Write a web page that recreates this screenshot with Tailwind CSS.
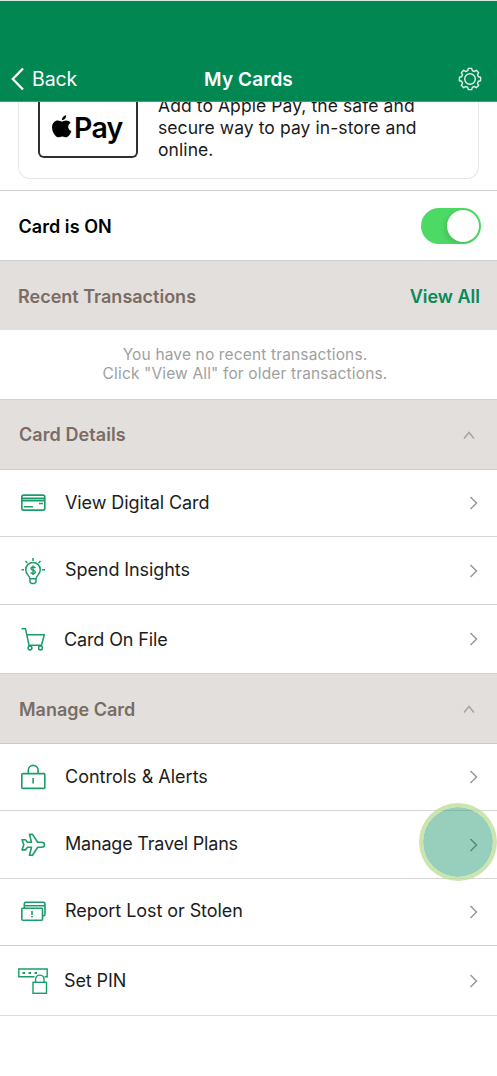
<!DOCTYPE html>
<html lang="en">
<head>
<meta charset="utf-8">
<title>My Cards</title>
<script src="https://cdn.jsdelivr.net/npm/@tailwindcss/browser@4"></script>
</head>
<body class="bg-white">
<div class="w-[497px] h-[1076px] overflow-hidden bg-white font-['Inter',sans-serif] text-[18px] text-[#1c1c1c] flex flex-col">
  <header class="h-[102px] shrink-0 bg-[#008752] border-t border-t-[#d5eae0] border-b border-b-[#3ba27b] text-white flex items-end">
    <div class="w-full h-[46px] grid grid-cols-3 items-center pl-[11px] pr-[15px] pt-[2px]">
      <div class="flex items-center gap-[8px]">
        <svg class="w-[13px] h-[24px]" viewBox="0 0 13 24" fill="none" stroke="currentColor" stroke-width="2.3"><path d="M12 1.5 1.8 12 12 22.5"/></svg>
        <span class="text-[19.500px] leading-6 tracking-[-0.1px]">Back</span>
      </div>
      <h1 class="text-center font-semibold text-[19px] leading-6 tracking-[0.1px] pl-[4px] pt-[2px]">My Cards</h1>
      <svg class="w-6 h-6 justify-self-end" viewBox="0 0 24 24" fill="none" stroke="#e6f3ed" stroke-width="1.4" stroke-linejoin="round"><path d="M10.300 1.400L13.700 1.400L14.300 3.600L16.300 4.500L18.300 3.300L20.700 5.700L19.500 7.700L20.400 9.700L22.600 10.300L22.600 13.700L20.400 14.300L19.500 16.300L20.700 18.300L18.300 20.700L16.300 19.500L14.300 20.400L13.700 22.600L10.300 22.600L9.700 20.400L7.700 19.500L5.700 20.700L3.300 18.300L4.500 16.300L3.600 14.300L1.400 13.700L1.400 10.300L3.600 9.700L4.500 7.700L3.300 5.700L5.700 3.300L7.700 4.500L9.700 3.600Z"/><circle cx="12" cy="12" r="5.300"/></svg>
    </div>
  </header>

  <section class="h-[88px] shrink-0 overflow-hidden px-[18px]">
    <div class="h-[77px] border border-t-0 border-[#e5e5e5] rounded-b-[12px] flex pl-[19px]">
      <div class="w-[100px] h-[56px] border-2 border-t-0 border-[#303030] rounded-b-[6px] flex pl-[11px] pt-[10px]">
        <svg class="w-[21px] h-[24px] mt-[2px]" viewBox="0 0 20 24" preserveAspectRatio="none" fill="#000"><path d="M10.300 6.300C10.200 3.700 12.100 1.700 14.400 1.300C14.700 3.900 12.600 6.200 10.300 6.300ZM10.300 7.600C11.300 7.600 12.500 6.500 14.500 6.500C16.100 6.500 17.700 7.300 18.700 8.800C15.300 10.900 15.800 15.700 19.400 17.100C18.700 19.400 16.800 23.300 14.600 23.300C13.100 23.300 12.600 22.400 10.700 22.400C8.900 22.400 8.200 23.300 6.900 23.300C4.300 23.300 1 17.900 1 13.500C1 9.300 3.600 6.600 6.500 6.600C8.200 6.600 9.300 7.600 10.300 7.600Z"/></svg>
        <span class="ml-[2px] text-[28.500px] leading-[32px] font-semibold tracking-[-0.7px] text-black">Pay</span>
      </div>
      <p class="ml-[20px] -mt-[7px] text-[17.500px] leading-[22px] tracking-[0.08px] whitespace-nowrap text-[#1a1a1a]">Add to Apple Pay, the safe and<br>secure way to pay in-store and<br>online.</p>
    </div>
  </section>

  <section class="h-[71px] shrink-0 border-y border-[#cdcdcd] flex items-center justify-between pl-[18.500px] pr-[16px]">
    <span class="font-semibold text-black tracking-[0.05px] pt-[2px]">Card is ON</span>
    <span class="w-[60px] h-[36px] rounded-full bg-[#4cd964] p-[2px] flex justify-end"><span class="size-8 rounded-full bg-white shadow-[-2px_2px_5px_rgba(0,0,0,0.12)]"></span></span>
  </section>

  <section class="h-[69px] shrink-0 bg-[#e3dfdc] flex items-center justify-between pl-[18px] pr-[17px] pt-[2px] font-semibold">
    <h2 class="text-[#7a6c65]">Recent Transactions</h2>
    <span class="text-[#088a58]">View All</span>
  </section>
  <p class="h-[70px] shrink-0 border-b border-[#d3d1d0] pt-[15px] text-center text-[15.500px] leading-[19px] tracking-[0.15px] text-[#a0a0a0] pr-[7px]">You have no recent transactions.<br>Click "View All" for older transactions.</p>

  <section class="h-[70px] shrink-0 bg-[#e3dfdc] border-b border-[#cbcbcb] flex items-center justify-between pl-[19px] pr-[21px]">
    <h2 class="font-semibold tracking-[0.08px] text-[#7a6c65]">Card Details</h2>
    <svg class="w-[14px] h-[10px]" viewBox="0 0 14 10" fill="none" stroke="#a5a3a1" stroke-width="1.500"><path d="M2 8.500 7 2.500 12 8.500"/></svg>
  </section>
  <ul class="shrink-0">
    <li class="h-[66px] border-b border-[#d5d5d5] box-content flex items-center">
      <svg class="w-[65px] h-[40px] shrink-0" viewBox="0 0 65 40" fill="none" stroke="#1b9c68" stroke-width="1.600"><rect x="21.800" y="12.100" width="23" height="15" rx="1.800"/><path stroke-width="1.800" d="M22 15.400H45M22 17.600H45"/><path d="M24 23.700H33M39 20.500H43"/></svg>
      <span class="grow pb-[2px] tracking-[-0.08px]">View Digital Card</span>
      <svg class="w-[9px] h-[14px] mr-[19px]" viewBox="0 0 9 14" fill="none" stroke="#999" stroke-width="1.500"><path d="M1.500 1 7.500 7 1.500 13"/></svg>
    </li>
    <li class="h-[67px] border-b border-[#d0d0d0] box-content flex items-center">
      <svg class="w-[65px] h-[40px] shrink-0" viewBox="0 0 65 40" fill="none" stroke="#1b9c68" stroke-width="1.500"><path d="M30 27.800C30 24.800 25.700 23.500 25.700 18.800A7.300 7.300 0 0 1 40.300 18.800C40.300 23.500 36 24.800 36 27.800ZM30 28V31L31.500 32.500H34.500L36 31V28M33 7V10M25.500 10 27.500 12M40.500 10 38.500 12M21.500 18.800H24M42 18.800H45"/><path stroke-width="1.400" d="M33 14.500V24M35.300 17C34.800 15.800 31 15.500 31 17.500C31 19.700 35.300 18.700 35.300 21C35.300 23.200 31.200 23 30.700 21.500"/></svg>
      <span class="grow pb-[3px] tracking-[-0.08px]">Spend Insights</span>
      <svg class="w-[9px] h-[14px] mr-[19px]" viewBox="0 0 9 14" fill="none" stroke="#999" stroke-width="1.500"><path d="M1.500 1 7.500 7 1.500 13"/></svg>
    </li>
    <li class="h-[68px] border-b border-[#d0d0d0] box-content flex items-center">
      <svg class="w-[64px] h-[40px] shrink-0" viewBox="0 0 64 40" fill="none" stroke="#1b9c68" stroke-width="1.500" stroke-linejoin="round"><path d="M21.500 9.700H25.500L29 26.300H41.500L44.300 15.800H26.800"/><circle cx="30" cy="29" r="1.900"/><circle cx="40.500" cy="29" r="1.900"/></svg>
      <span class="grow tracking-[-0.12px]">Card On File</span>
      <svg class="w-[9px] h-[14px] mr-[19px]" viewBox="0 0 9 14" fill="none" stroke="#999" stroke-width="1.500"><path d="M1.500 1 7.500 7 1.500 13"/></svg>
    </li>
  </ul>

  <section class="h-[70px] shrink-0 bg-[#e3dfdc] border-b border-[#cbcbcb] flex items-center justify-between pl-[19px] pr-[21px] pt-px">
    <h2 class="font-semibold text-[#7a6c65]">Manage Card</h2>
    <svg class="w-[14px] h-[10px]" viewBox="0 0 14 10" fill="none" stroke="#a5a3a1" stroke-width="1.500"><path d="M2 8.500 7 2.500 12 8.500"/></svg>
  </section>
  <ul class="shrink-0">
    <li class="h-[66px] border-b border-[#d5d5d5] box-content flex items-center">
      <svg class="w-[65px] h-[40px] shrink-0" viewBox="0 0 65 40" fill="none" stroke="#1b9c68" stroke-width="1.600"><rect x="21.800" y="16.600" width="23" height="14.800" rx="1"/><path d="M28.300 16.600V13.300A4.900 4.900 0 0 1 38.100 13.300V16.600M33.100 21V26.500"/></svg>
      <span class="grow pb-[2px]">Controls &amp; Alerts</span>
      <svg class="w-[9px] h-[14px] mr-[19px]" viewBox="0 0 9 14" fill="none" stroke="#999" stroke-width="1.500"><path d="M1.500 1 7.500 7 1.500 13"/></svg>
    </li>
    <li class="relative h-[67px] border-b border-[#d5d5d5] box-content flex items-center">
      <svg class="w-[65px] h-[40px] shrink-0" viewBox="0 0 65 40" fill="none" stroke="#1b9c68" stroke-width="1.600" stroke-linejoin="round"><path d="M29.500 9.400H32.500L37.700 17.200H41.500C43.500 17.200 44.500 18.700 44.500 19.700C44.500 20.700 43.500 22.200 41.500 22.200H37.700L32.500 30.200H29.500L31.500 22.200H27.500L25.500 24.900H22L23.800 19.700L22 14.700H25.500L27.500 17.200H31.500Z"/></svg>
      <span class="grow pb-[3px] tracking-[-0.2px]">Manage Travel Plans</span>
      <svg class="w-[9px] h-[14px] mr-[19px]" viewBox="0 0 9 14" fill="none" stroke="#777" stroke-width="1.500"><path d="M1.500 1 7.500 7 1.500 13"/></svg>
      <span class="absolute left-[419px] -top-[8px] size-[78px] rounded-full border-[4.500px] border-[#b8de93]/75 bg-[#32a07a]/50 bg-clip-padding"></span>
    </li>
    <li class="h-[66px] border-b border-[#d0d0d0] box-content flex items-center">
      <svg class="w-[65px] h-[40px] shrink-0" viewBox="0 0 65 40" fill="none" stroke="#1b9c68" stroke-width="1.600"><rect x="21.800" y="16.300" width="20.700" height="12" rx="1"/><path d="M24.300 16.300V11.800Q24.300 10.300 25.800 10.300H43.500Q45 10.300 45 11.800V22.300Q45 23.800 43.500 23.800H42.500M24.500 13.800H45M32 19V23M32 24V25.500"/></svg>
      <span class="grow pb-[3px] tracking-[-0.07px]">Report Lost or Stolen</span>
      <svg class="w-[9px] h-[14px] mr-[19px]" viewBox="0 0 9 14" fill="none" stroke="#999" stroke-width="1.500"><path d="M1.500 1 7.500 7 1.500 13"/></svg>
    </li>
    <li class="h-[69px] border-b border-[#dcdcdc] box-content flex items-center">
      <svg class="w-[64px] h-[40px] shrink-0" viewBox="0 0 64 40" fill="none" stroke="#1b9c68" stroke-width="1.400"><path d="M34.500 15.800H18.800V8H47.200V15.800H44.500"/><rect x="33" y="21.300" width="13.500" height="11"/><path d="M35.600 21V18.300A4.200 4.200 0 0 1 44 18.300V21"/><path stroke-width="2.200" d="M22.500 12H25M28.500 12H31M34.500 12H37"/></svg>
      <span class="grow tracking-[-0.1px]">Set PIN</span>
      <svg class="w-[9px] h-[14px] mr-[19px]" viewBox="0 0 9 14" fill="none" stroke="#999" stroke-width="1.500"><path d="M1.500 1 7.500 7 1.500 13"/></svg>
    </li>
  </ul>
</div>
</body>
</html>
